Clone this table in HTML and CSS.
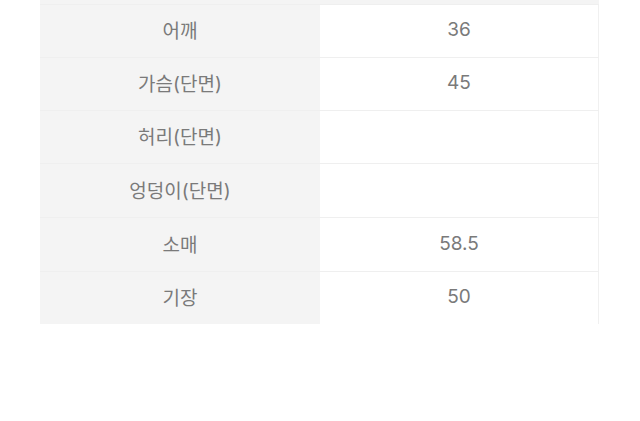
FILE: index.html
```html
<!DOCTYPE html>
<html lang="ko">
<head>
<meta charset="utf-8">
<link rel="stylesheet" href="styles.css">
</head>
<body>
<div class="page">
  <div class="size-table">
    <div class="head-strip"></div>
    <div class="row"><div class="label">어깨</div><div class="value">36</div></div>
    <div class="row"><div class="label">가슴(단면)</div><div class="value">45</div></div>
    <div class="row"><div class="label">허리(단면)</div><div class="value"></div></div>
    <div class="row tall"><div class="label">엉덩이(단면)</div><div class="value"></div></div>
    <div class="row tall"><div class="label">소매</div><div class="value">58.5</div></div>
    <div class="row"><div class="label">기장</div><div class="value">50</div></div>
  </div>
</div>
</body>
</html>
```

FILE: styles.css
```css
html, body {
  margin: 0;
  padding: 0;
  background: #ffffff;
}

.page {
  padding-left: 40px;
  width: 640px;
  box-sizing: border-box;
  font-family: "Inter", "Noto Sans CJK KR", sans-serif;
  color: #7a7a7a;
  font-size: 19px;
}

.size-table {
  width: 559px;
  display: flex;
  flex-direction: column;
}

.head-strip {
  height: 4px;
  background: #f4f4f4;
}

.row {
  display: grid;
  grid-template-columns: 280px 279px;
  height: 53px;
}

.row.tall {
  height: 54px;
}

.label,
.value {
  display: flex;
  align-items: center;
  justify-content: center;
  border-top: 1px solid #efefef;
  padding-bottom: 3px;
  box-sizing: border-box;
}

.label {
  background: #f4f4f4;
}

.value {
  background: #ffffff;
  border-right: 1px solid #f0f0f0;
}
```
